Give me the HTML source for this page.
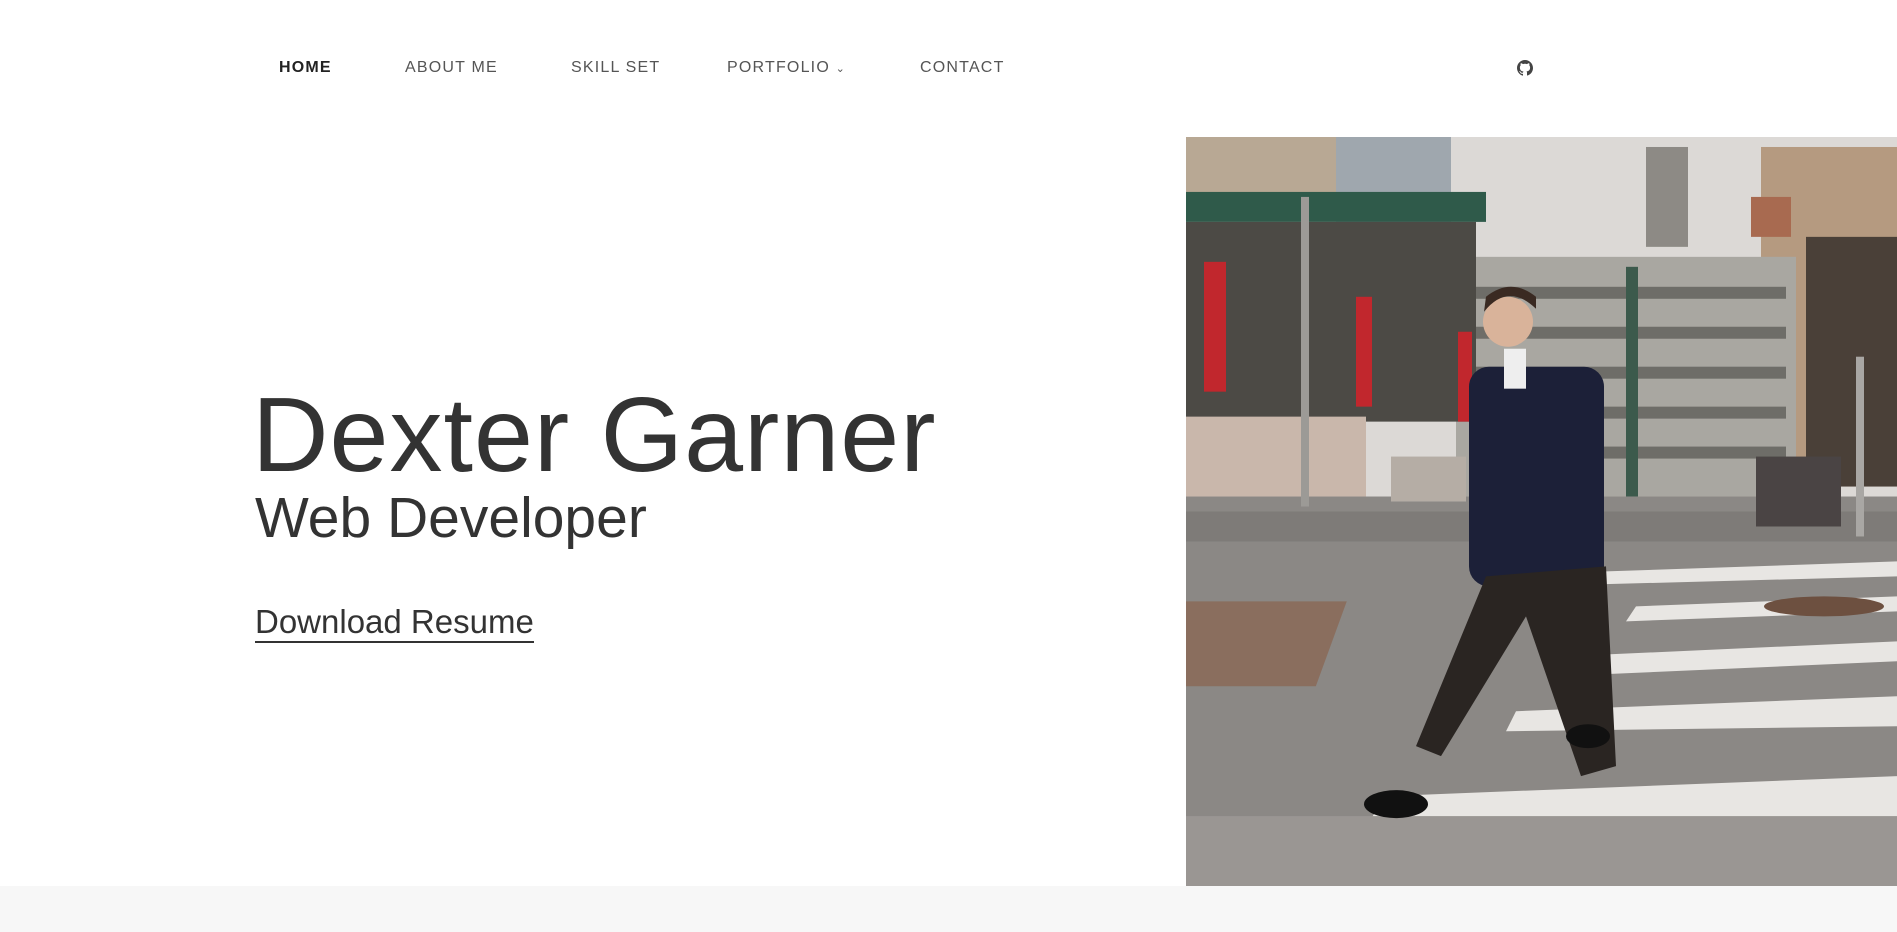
<!DOCTYPE html>
<html><head><meta charset="utf-8"><style>
body{margin:0;width:1897px;height:932px;background:#fff;font-family:"Liberation Sans",sans-serif;color:#333;position:relative;overflow:hidden}
.nav a{position:absolute;top:59px;font-size:16px;letter-spacing:1.2px;color:#555;text-decoration:none}
.h1{position:absolute;left:252px;top:382px;font-size:106px;color:#333;letter-spacing:1px;line-height:1}
.h2{position:absolute;left:255px;top:490px;font-size:57px;color:#333;line-height:1}
.dl{position:absolute;left:255px;top:605px;font-size:33px;color:#333;line-height:1;border-bottom:2px solid #333;padding-bottom:3px}
.foot{position:absolute;left:0;top:886px;width:1897px;height:46px;background:#f7f7f7}
</style></head><body>
<div class="nav">
<a style="left:279px;color:#222;font-weight:bold">HOME</a>
<a style="left:405px">ABOUT ME</a>
<a style="left:571px">SKILL SET</a>
<a style="left:727px">PORTFOLIO <span style="font-size:11px">&#8964;</span></a>
<a style="left:920px">CONTACT</a>
</div>
<svg style="position:absolute;left:1517px;top:60px" width="16" height="16" viewBox="0 0 16 16"><path fill="#444" d="M8 0C3.6 0 0 3.6 0 8c0 3.5 2.3 6.5 5.5 7.6.4.1.5-.2.5-.4v-1.4c-2.2.5-2.7-1-2.7-1-.4-.9-.9-1.2-.9-1.2-.7-.5.1-.5.1-.5.8.1 1.2.8 1.2.8.7 1.2 1.9.9 2.3.7.1-.5.3-.9.5-1.100-1.8-.2-3.6-.9-3.6-4 0-.9.3-1.6.8-2.1-.1-.2-.4-1 .1-2.1 0 0 .7-.2 2.2.8.6-.2 1.300-.3 2-.3s1.4.1 2 .3c1.5-1 2.2-.8 2.2-.8.4 1.100.2 1.900.1 2.1.5.6.8 1.3.8 2.1 0 3.1-1.900 3.7-3.6 3.9.3.3.5.8.5 1.5v2.2c0 .2.1.5.6.4C13.7 14.5 16 11.5 16 8c0-4.4-3.6-8-8-8z"/></svg>
<div class="h1">Dexter Garner</div>
<div class="h2">Web Developer</div>
<div class="dl">Download Resume</div>
<svg style="position:absolute;left:1186px;top:137px" width="711" height="749" viewBox="0 0 711 750" preserveAspectRatio="none">
<rect width="711" height="750" fill="#dcd9d6"/>
<rect x="0" y="0" width="155" height="80" fill="#b8a894"/>
<rect x="150" y="0" width="115" height="140" fill="#9fa7ae"/>
<rect x="460" y="10" width="42" height="100" fill="#8d8a85"/>
<rect x="575" y="10" width="136" height="340" fill="#b59a80"/>
<rect x="565" y="60" width="40" height="40" fill="#a86a50"/>
<rect x="270" y="120" width="340" height="240" fill="#a9a7a1"/>
<g fill="#6e6d68"><rect x="290" y="150" width="310" height="12"/><rect x="290" y="190" width="310" height="12"/><rect x="290" y="230" width="310" height="12"/><rect x="290" y="270" width="310" height="12"/><rect x="290" y="310" width="310" height="12"/></g>
<rect x="440" y="130" width="12" height="230" fill="#3c5a4c"/>
<rect x="620" y="100" width="91" height="250" fill="#4a4038"/>
<rect x="0" y="55" width="300" height="30" fill="#2f5a4a"/>
<rect x="0" y="85" width="290" height="200" fill="#4c4a45"/>
<rect x="18" y="125" width="22" height="130" fill="#c1272d"/><rect x="170" y="160" width="16" height="110" fill="#c1272d"/><rect x="272" y="195" width="14" height="90" fill="#c1272d"/>
<rect x="0" y="280" width="180" height="80" fill="#c9b7ab"/>
<rect x="0" y="360" width="711" height="390" fill="#8b8885"/>
<rect x="0" y="375" width="711" height="30" fill="#7e7b78"/>
<g fill="#e8e6e3"><polygon points="420,435 711,425 711,440 410,448"/><polygon points="450,470 711,460 711,475 440,485"/><polygon points="380,520 711,505 711,525 370,540"/><polygon points="330,575 711,560 711,590 320,595"/><polygon points="200,660 711,640 711,690 180,690"/></g>
<rect x="0" y="465" width="330" height="85" fill="#8a6e5e" transform="skewX(-20)"/>
<rect x="0" y="680" width="711" height="70" fill="#9a9693"/>
<rect x="205" y="320" width="75" height="45" fill="#b5ada5"/>
<rect x="570" y="320" width="85" height="70" fill="#4a4444"/>
<rect x="115" y="60" width="8" height="310" fill="#9c9a96"/>
<rect x="670" y="220" width="8" height="180" fill="#a9a7a4"/>
<ellipse cx="638" cy="470" rx="60" ry="10" fill="#6d5040"/>
<rect x="283" y="230" width="135" height="220" rx="20" fill="#1c2038"/>
<polygon points="300,440 420,430 430,630 395,640 340,480 255,620 230,610" fill="#2a2522"/>
<circle cx="322" cy="185" r="25" fill="#d9b39a"/>
<path d="M298,175 Q322,145 350,172 L350,160 Q325,140 300,160Z" fill="#3a2a22"/>
<rect x="318" y="212" width="22" height="40" fill="#eee"/>
<ellipse cx="210" cy="668" rx="32" ry="14" fill="#111"/>
<ellipse cx="402" cy="600" rx="22" ry="12" fill="#111"/>
</svg>
<div class="foot"></div>
</body></html>
